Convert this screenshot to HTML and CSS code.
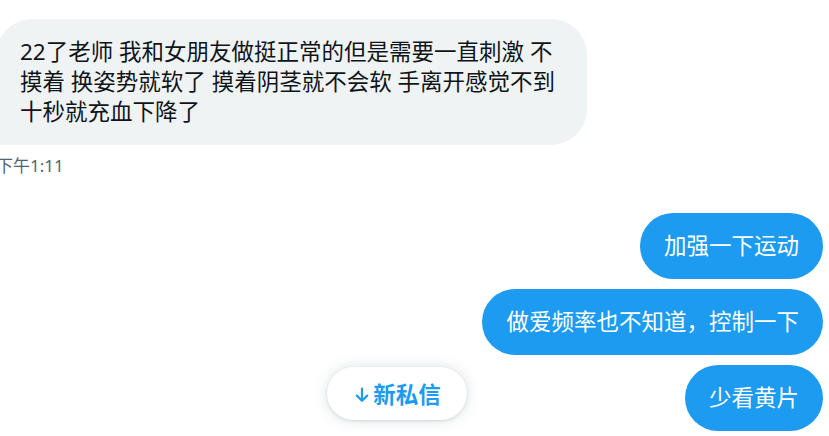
FILE: index.html
```html
<!DOCTYPE html>
<html lang="zh-CN">
<head>
    <meta charset="UTF-8">
    <meta name="viewport" content="width=device-width, initial-scale=1.0">
    <title>私信</title>
    <link rel="stylesheet" href="styles.css">
</head>
<body>
    <div class="thread">
        <div class="message received">
            <div class="bubble">22了老师 我和女朋友做挺正常的但是需要一直刺激 不<br>摸着 换姿势就软了 摸着阴茎就不会软 手离开感觉不到<br>十秒就充血下降了</div>
            <div class="time">下午1:11</div>
        </div>

        <div class="message sent first">
            <div class="bubble">加强一下运动</div>
        </div>
        <div class="message sent">
            <div class="bubble">做爱频率也不知道，控制一下</div>
        </div>
        <div class="message sent">
            <div class="bubble">少看黄片</div>
        </div>

        <button class="new-pill">
            <svg width="14" height="16" viewBox="0 0 14 16" aria-hidden="true">
                <path d="M7 1.5v12M1.8 8.6L7 13.8l5.2-5.2" fill="none" stroke="currentColor" stroke-width="2.2" stroke-linecap="round" stroke-linejoin="round"/>
            </svg>
            <span>新私信</span>
        </button>
    </div>
</body>
</html>
```

FILE: styles.css
```css
body {
    margin: 0;
    background-color: white;
    font-family: "Noto Sans", "Noto Sans CJK SC", sans-serif;
    overflow: hidden;
}

.thread {
    position: relative;
    width: 829px;
    height: 436px;
    padding: 19px 6px 0 0;
    box-sizing: border-box;
    display: flex;
    flex-direction: column;
}

.message {
    display: flex;
    flex-direction: column;
}

.bubble {
    padding: 18px 24px;
    font-size: 22.5px;
    line-height: 30px;
    border-radius: 36px;
    box-sizing: border-box;
}

.received {
    align-items: flex-start;
    margin-left: -4px;
}

.received .bubble {
    width: 591px;
    background-color: #eff3f4;
    color: #0f1419;
    border-bottom-left-radius: 6px;
}

.time {
    margin-top: 9px;
    font-size: 17px;
    line-height: 24px;
    color: #536471;
}

.sent {
    align-items: flex-end;
    margin-top: 10px;
}

.sent.first {
    margin-top: 35px;
}

.sent .bubble {
    background-color: #1d9bf0;
    color: white;
    white-space: nowrap;
}

.new-pill {
    position: absolute;
    left: 327px;
    top: 367px;
    width: 140px;
    height: 53px;
    display: flex;
    align-items: center;
    justify-content: center;
    gap: 4px;
    padding: 0 0 0 2px;
    border: none;
    border-radius: 27px;
    background-color: white;
    color: #1d9bf0;
    font-family: "Noto Sans", "Noto Sans CJK SC", sans-serif;
    font-size: 22.5px;
    font-weight: bold;
    box-shadow: 0 0 14px rgba(101, 119, 134, 0.22), 0 1px 3px rgba(101, 119, 134, 0.2);
    cursor: pointer;
}

.new-pill svg {
    margin-top: 2px;
}
```
